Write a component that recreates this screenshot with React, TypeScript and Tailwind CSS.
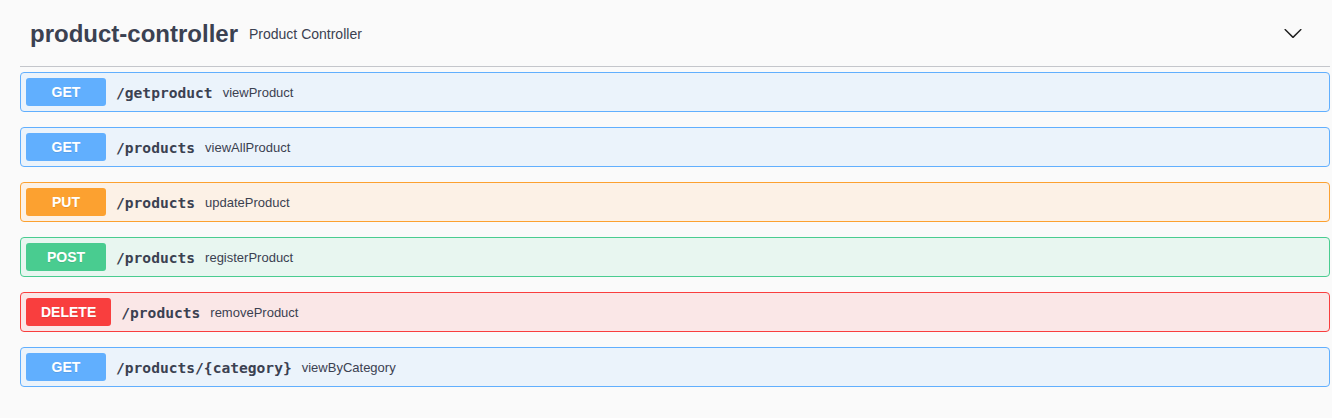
const ops = [
  { method: 'GET', path: '/getproduct', summary: 'viewProduct', kind: 'get' },
  { method: 'GET', path: '/products', summary: 'viewAllProduct', kind: 'get' },
  { method: 'PUT', path: '/products', summary: 'updateProduct', kind: 'put' },
  { method: 'POST', path: '/products', summary: 'registerProduct', kind: 'post' },
  { method: 'DELETE', path: '/products', summary: 'removeProduct', kind: 'delete' },
  { method: 'GET', path: '/products/{category}', summary: 'viewByCategory', kind: 'get' },
] as const

const styles = {
  get: { block: 'border-[#61affe] bg-[#ebf3fb]', badge: 'bg-[#61affe]' },
  put: { block: 'border-[#fca130] bg-[#fcf1e6]', badge: 'bg-[#fca130]' },
  post: { block: 'border-[#49cc90] bg-[#e8f6f0]', badge: 'bg-[#49cc90]' },
  delete: { block: 'border-[#f93e3e] bg-[#fae7e7]', badge: 'bg-[#f93e3e]' },
}

function Chevron() {
  return (
    <svg width="20" height="20" viewBox="0 0 20 20" className="text-[#1f1f1f]">
      <path
        fill="currentColor"
        d="M17.418 6.109c.272-.268.709-.268.979 0s.271.701 0 .969l-7.908 7.83c-.27.268-.707.268-.979 0l-7.908-7.83c-.27-.268-.27-.701 0-.969.271-.268.709-.268.979 0L10 13.25l7.418-7.141z"
      />
    </svg>
  )
}

export default function App() {
  return (
    <div className="min-h-[418px] bg-[#fafafa] pl-[20px] pr-[2px] font-['Liberation_Sans',Arial,sans-serif] text-[#3b4151]">
      <div className="flex h-[67px] items-center border-b border-[#c4c6cb] pl-[10px] pr-[27px]">
        <h4 className="pt-[2px] text-[24px] font-bold leading-none">product-controller</h4>
        <span className="ml-[11px] pt-[3px] text-[14px]">Product Controller</span>
        <div className="flex-1" />
        <Chevron />
      </div>
      <div className="mt-[5px] flex flex-col gap-[15px]">
        {ops.map(op => (
          <div
            key={op.method + op.path}
            className={`flex items-center rounded-[4px] border p-[5px] ${styles[op.kind].block}`}
          >
            <span
              className={`flex h-[28px] min-w-[80px] items-center justify-center rounded-[3px] px-[15px] pt-[1px] text-[14px] font-bold text-white [text-shadow:0_1px_0_rgba(0,0,0,0.1)] ${styles[op.kind].badge}`}
            >
              {op.method}
            </span>
            <span className="px-[10px] pt-[2px] font-['DejaVu_Sans_Mono',monospace] text-[14.6px] font-bold">
              {op.path}
            </span>
            <span className="pt-[2px] text-[13px]">{op.summary}</span>
          </div>
        ))}
      </div>
    </div>
  )
}
